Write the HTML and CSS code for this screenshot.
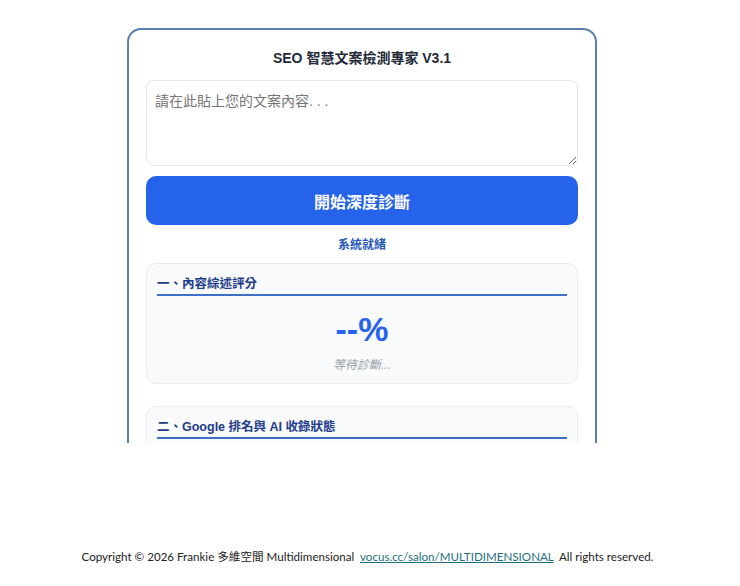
FILE: index.html
```html
<!DOCTYPE html>
<html lang="zh-Hant">
<head>
<meta charset="utf-8">
<title>SEO 智慧文案檢測專家 V3.1</title>
<link rel="stylesheet" href="styles.css">
</head>
<body>
<div class="page">
  <div class="frame">
    <div class="app">
      <h1 class="title">SEO 智慧文案檢測專家 V3.1</h1>
      <textarea class="input" placeholder="請在此貼上您的文案內容. . ."></textarea>
      <button class="run">開始深度診斷</button>
      <div class="status">系統就緒</div>
      <section class="panel">
        <h2 class="panel-head">一、內容綜述評分</h2>
        <div class="score">--%</div>
        <div class="wait">等待診斷...</div>
      </section>
      <section class="panel">
        <h2 class="panel-head">二、Google 排名與 AI 收錄狀態</h2>
      </section>
    </div>
  </div>
  <footer class="footer">Copyright © 2026 Frankie 多維空間 Multidimensional&nbsp; <a href="#">vocus.cc/salon/MULTIDIMENSIONAL</a>&nbsp; All rights reserved.</footer>
</div>
</body>
</html>
```
FILE: styles.css
```css
html, body {
  margin: 0;
  padding: 0;
  background: #ffffff;
}
.page {
  width: 740px;
  display: flex;
  flex-direction: column;
}
.frame {
  height: 415px;
  margin: 28px 0 0 127px;
  width: 470px;
  overflow: hidden;
}
.app {
  box-sizing: border-box;
  width: 470px;
  min-height: 460px;
  border: 2px solid #5b7fb4;
  border-radius: 14px;
  padding: 0 17px 20px;
  font-family: "Liberation Sans", Arial, "Noto Sans CJK TC", sans-serif;
  display: flex;
  flex-direction: column;
}
.title {
  margin: 18px 0 12px;
  font-size: 14px;
  line-height: 20px;
  font-weight: bold;
  text-align: center;
  color: #1f2937;
}
.input {
  box-sizing: border-box;
  width: 432px;
  height: 86px;
  border: 1px solid #e3e6ea;
  border-radius: 8px;
  padding: 10px 8px;
  font-family: "Liberation Sans", Arial, "Noto Sans CJK TC", sans-serif;
  font-size: 14px;
  line-height: 20px;
  color: #333;
  resize: vertical;
  outline: none;
}
.input::placeholder {
  color: #757575;
}
.run {
  margin-top: 10px;
  height: 49px;
  border: none;
  border-radius: 10px;
  background: #2563eb;
  color: #ffffff;
  font-family: "Liberation Sans", Arial, "Noto Sans CJK TC", sans-serif;
  font-size: 16px;
  font-weight: bold;
}
.status {
  margin-top: 12px;
  font-size: 12px;
  line-height: 16px;
  font-weight: bold;
  text-align: center;
  color: #2c5cba;
}
.panel {
  margin-top: 10px;
  background: #f8fafc;
  border: 1px solid #e8ecf0;
  border-radius: 10px;
  padding: 11px 10px 10px;
  display: flex;
  flex-direction: column;
}
.panel + .panel {
  margin-top: 22px;
  min-height: 60px;
}
.panel-head {
  margin: 0;
  font-size: 12.5px;
  line-height: 18px;
  font-weight: bold;
  color: #1e3a8a;
  border-bottom: 2px solid #3f6fc6;
  padding-bottom: 1px;
}
.score {
  margin-top: 12px;
  font-size: 34px;
  line-height: 42px;
  font-weight: bold;
  text-align: center;
  color: #2563eb;
}
.wait {
  margin-top: 7px;
  font-size: 12px;
  line-height: 16px;
  font-style: italic;
  text-align: center;
  color: #969ca6;
}
.footer {
  margin-top: 105px;
  font-family: Lato, "Noto Sans CJK TC", sans-serif;
  font-size: 11.6px;
  line-height: 18px;
  color: #222222;
  text-align: center;
  padding-right: 5px;
}
.footer a {
  color: #1f6f7f;
  text-decoration: underline;
}
```
